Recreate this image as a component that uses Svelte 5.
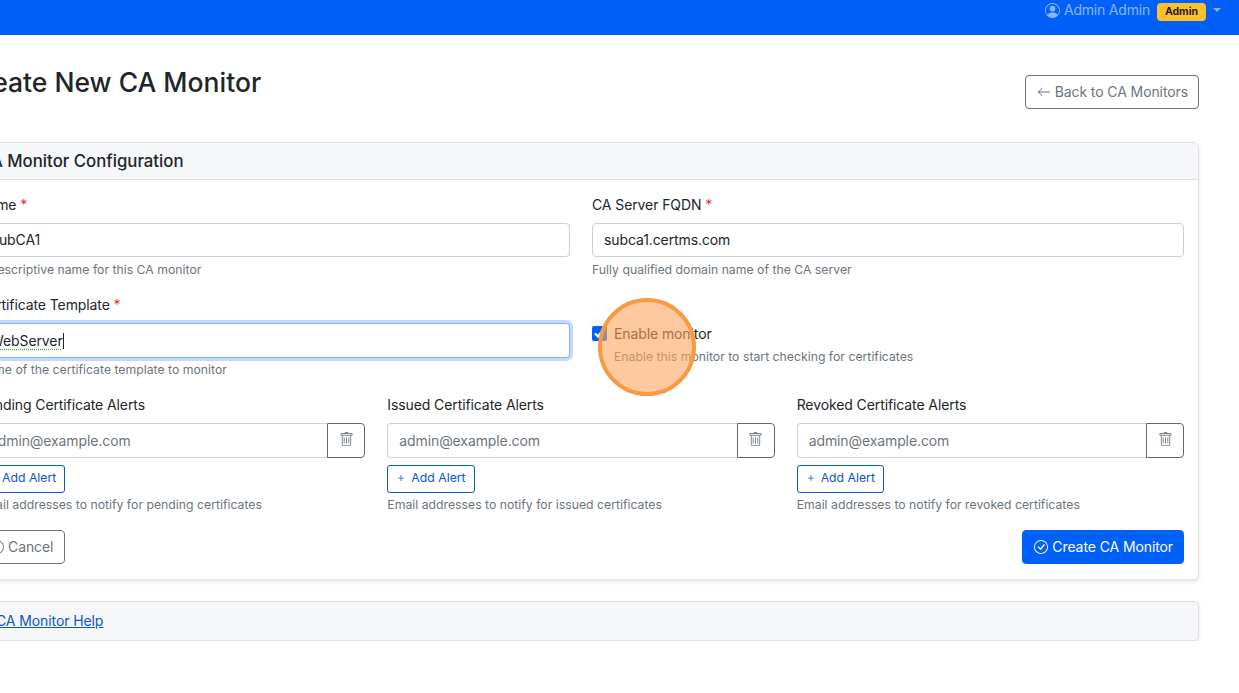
<script>
  const alerts = [
    { label: 'Pending Certificate Alerts', help: 'Email addresses to notify for pending certificates' },
    { label: 'Issued Certificate Alerts', help: 'Email addresses to notify for issued certificates' },
    { label: 'Revoked Certificate Alerts', help: 'Email addresses to notify for revoked certificates' }
  ];
</script>

<nav class="navbar">
  <div class="user">
    <svg width="15" height="15" viewBox="0 0 16 16" fill="currentColor">
      <path d="M11 6a3 3 0 1 1-6 0 3 3 0 0 1 6 0z" />
      <path fill-rule="evenodd" d="M0 8a8 8 0 1 1 16 0A8 8 0 0 1 0 8zm8-7a7 7 0 0 0-5.468 11.37C3.242 11.226 4.805 10 8 10s4.757 1.225 5.468 2.37A7 7 0 0 0 8 1z" />
    </svg>
    <span class="user-name">Admin Admin</span>
    <span class="badge">Admin</span>
    <span class="caret"></span>
  </div>
</nav>

<main class="page">
  <div class="title-row">
    <h1>Create New CA Monitor</h1>
    <button class="btn btn-grey back">
      <svg width="14" height="14" viewBox="0 0 16 16" fill="currentColor"><path fill-rule="evenodd" d="M15 8a.5.5 0 0 0-.5-.5H2.707l3.147-3.146a.5.5 0 1 0-.708-.708l-4 4a.5.5 0 0 0 0 .708l4 4a.5.5 0 0 0 .708-.708L2.707 8.5H14.5A.5.5 0 0 0 15 8z" /></svg>
      Back to CA Monitors
    </button>
  </div>

  <section class="card">
    <header class="card-header"><h2>CA Monitor Configuration</h2></header>
    <div class="card-body">
      <div class="two">
        <div class="field">
          <label for="name">Name <em>*</em></label>
          <input id="name" class="input short" value="SubCA1" />
          <small>A descriptive name for this CA monitor</small>
        </div>
        <div class="field">
          <label for="fqdn">CA Server FQDN <em>*</em></label>
          <input id="fqdn" class="input short" value="subca1.certms.com" />
          <small>Fully qualified domain name of the CA server</small>
        </div>
        <div class="field">
          <label for="tpl">Certificate Template <em>*</em></label>
          <div class="input focused"><span class="squiggle">WebServer</span><i class="cursor"></i></div>
          <small>Name of the certificate template to monitor</small>
        </div>
        <div class="check">
          <input id="enable" type="checkbox" checked />
          <div class="check-text">
            <label for="enable">Enable monitor</label>
            <small>Enable this monitor to start checking for certificates</small>
          </div>
        </div>
      </div>

      <div class="three">
        {#each alerts as a}
          <div class="field">
            <span class="label">{a.label}</span>
            <div class="group">
              <input class="input" placeholder="admin@example.com" />
              <button class="trash" aria-label="Remove">
                <svg width="15" height="17" viewBox="0 0 16 16" fill="currentColor">
                  <path d="M5.5 5.5A.5.5 0 0 1 6 6v6a.5.5 0 0 1-1 0V6a.5.5 0 0 1 .5-.5zm2.5 0a.5.5 0 0 1 .5.5v6a.5.5 0 0 1-1 0V6a.5.5 0 0 1 .5-.5zm3 .5a.5.5 0 0 0-1 0v6a.5.5 0 0 0 1 0V6z" />
                  <path fill-rule="evenodd" d="M14.5 3a1 1 0 0 1-1 1H13v9a2 2 0 0 1-2 2H5a2 2 0 0 1-2-2V4h-.5a1 1 0 0 1-1-1V2a1 1 0 0 1 1-1H6a1 1 0 0 1 1-1h2a1 1 0 0 1 1 1h3.5a1 1 0 0 1 1 1v1zM4.118 4 4 4.059V13a1 1 0 0 0 1 1h6a1 1 0 0 0 1-1V4.059L11.882 4H4.118zM2.5 3V2h11v1h-11z" />
                </svg>
              </button>
            </div>
            <button class="add">
              <svg width="12" height="12" viewBox="0 0 16 16" fill="currentColor"><path d="M8 4a.5.5 0 0 1 .5.5v3h3a.5.5 0 0 1 0 1h-3v3a.5.5 0 0 1-1 0v-3h-3a.5.5 0 0 1 0-1h3v-3A.5.5 0 0 1 8 4z" /></svg>
              Add Alert
            </button>
            <small class="alert-help">{a.help}</small>
          </div>
        {/each}
      </div>

      <div class="actions">
        <button class="btn btn-grey cancel">
          <svg width="14" height="14" viewBox="0 0 16 16" fill="currentColor"><path d="M8 15A7 7 0 1 1 8 1a7 7 0 0 1 0 14zm0 1A8 8 0 1 0 8 0a8 8 0 0 0 0 16z" /><path d="M4.646 4.646a.5.5 0 0 1 .708 0L8 7.293l2.646-2.647a.5.5 0 0 1 .708.708L8.707 8l2.647 2.646a.5.5 0 0 1-.708.708L8 8.707l-2.646 2.647a.5.5 0 0 1-.708-.708L7.293 8 4.646 5.354a.5.5 0 0 1 0-.708z" /></svg>
          Cancel
        </button>
        <button class="btn btn-primary">
          <svg width="14" height="14" viewBox="0 0 16 16" fill="currentColor"><path d="M8 15A7 7 0 1 1 8 1a7 7 0 0 1 0 14zm0 1A8 8 0 1 0 8 0a8 8 0 0 0 0 16z" /><path d="M10.97 4.97a.235.235 0 0 0-.02.022L7.477 9.417 5.384 7.323a.75.75 0 0 0-1.06 1.06L6.97 11.03a.75.75 0 0 0 1.079-.02l3.992-4.99a.75.75 0 0 0-1.071-1.05z" /></svg>
          Create CA Monitor
        </button>
      </div>
    </div>
  </section>

  <section class="card help-card">
    <a href="#help">CA Monitor Help</a>
  </section>

  <div class="click-ring"></div>
</main>

<style>
  :global(body) {
    overflow: hidden;
    background: #fff;
  }

  :global(*) {
    box-sizing: border-box;
  }

  .navbar {
    height: 35px;
    background: #0160f7;
    display: flex;
    justify-content: flex-end;
    padding-right: 18px;
    font: 14px/20px Inter, "Liberation Sans", sans-serif;
  }

  .user {
    display: flex;
    align-items: center;
    height: 20px;
    color: rgba(255, 255, 255, 0.55);
  }

  .user-name {
    margin-left: 4px;
    letter-spacing: -0.2px;
  }

  .badge {
    margin-left: 7px;
    margin-top: 4px;
    width: 49px;
    height: 18px;
    text-align: center;
    background: #ffc02e;
    color: #1d1d1f;
    font-size: 10.5px;
    font-weight: 700;
    line-height: 18px;
    border-radius: 4px;
  }

  .caret {
    margin-left: 7px;
    border-top: 4px solid rgba(255, 255, 255, 0.55);
    border-left: 4px solid transparent;
    border-right: 4px solid transparent;
  }

  .page {
    position: relative;
    width: 1236px;
    margin-left: -37px;
    font: 14px/20px Inter, "Liberation Sans", sans-serif;
    letter-spacing: -0.1px;
    color: #212529;
  }

  .title-row {
    display: flex;
    justify-content: space-between;
    padding-top: 30px;
    height: 107px;
  }

  h1 {
    margin: 0;
    font-size: 26.5px;
    line-height: 34px;
    font-weight: 500;
    letter-spacing: 0;
  }

  .btn {
    height: 34px;
    display: inline-flex;
    align-items: center;
    gap: 4px;
    padding: 0 10px 0 11px;
    border-radius: 4px;
    font: inherit;
    letter-spacing: inherit;
    background: #fff;
  }

  .btn-grey {
    border: 1px solid #6c757d;
    color: #6c757d;
  }

  .back {
    margin-top: 10px;
  }

  .cancel {
    padding-right: 11px;
  }

  .btn-primary {
    background: #0160f7;
    border: 1px solid #0160f7;
    color: #fff;
  }

  .card {
    border: 1px solid #dfe1e4;
    border-radius: 5px;
    box-shadow: 0 2px 4px rgba(0, 0, 0, 0.1);
    background: #fff;
  }

  .card-header {
    height: 37px;
    background: #f6f7f9;
    border-bottom: 1px solid #dfe1e4;
    padding: 8px 15px;
    border-radius: 5px 5px 0 0;
  }

  h2 {
    margin: 0;
    font-size: 16.8px;
    line-height: 20px;
    font-weight: 500;
    letter-spacing: 0;
  }

  .card-body {
    padding: 15px 14px 15px 14px;
  }

  .two {
    display: grid;
    grid-template-columns: 1fr 1fr;
    column-gap: 22px;
    row-gap: 16px;
  }

  .three {
    display: grid;
    grid-template-columns: repeat(3, 1fr);
    column-gap: 22px;
    margin-top: 16px;
  }

  .field {
    display: flex;
    flex-direction: column;
    align-items: flex-start;
  }

  label,
  .label {
    line-height: 20px;
  }

  .field > label,
  .field > .label {
    margin-bottom: 8px;
  }

  em {
    color: #dc3545;
    font-style: normal;
  }

  .input {
    width: 100%;
    height: 35px;
    border: 1px solid #ced1d4;
    border-radius: 4px;
    padding: 0 11px 1px;
    font: inherit;
    letter-spacing: inherit;
    color: #212529;
    background: #fff;
    outline: none;
  }

  .short {
    height: 34px;
    margin-bottom: 1px;
  }

  .input::placeholder {
    color: #6c757d;
    opacity: 1;
  }

  .focused {
    display: flex;
    align-items: center;
    padding: 0 11px;
    border-color: #86aef0;
    box-shadow: 0 0 0 3px rgba(13, 98, 245, 0.25);
  }

  .squiggle {
    text-decoration: underline dotted #5da05d;
    text-underline-offset: 3px;
  }

  .cursor {
    width: 1px;
    height: 16px;
    background: #212529;
  }

  small {
    font-size: 12.25px;
    line-height: 18px;
    color: #6c757d;
    letter-spacing: 0;
    margin-top: 3px;
  }

  .check {
    display: flex;
    gap: 7px;
    align-self: start;
    margin-top: 29px;
  }

  .check input {
    width: 15px;
    height: 15px;
    margin: 2px 0 0;
    accent-color: #0160f7;
  }

  .check-text {
    display: flex;
    flex-direction: column;
  }

  .check-text small {
    margin-top: 4px;
  }

  .group {
    display: flex;
    width: 100%;
  }

  .group .input {
    flex: 1;
    min-width: 0;
    border-radius: 4px 0 0 4px;
    border-right: 0;
  }

  .trash {
    width: 38px;
    height: 35px;
    border: 1px solid #5f666d;
    border-radius: 0 4px 4px 0;
    background: #fff;
    color: #7c848c;
    padding: 0 0 2px;
    display: flex;
    align-items: center;
    justify-content: center;
  }

  .add {
    margin-top: 7px;
    height: 28px;
    display: inline-flex;
    align-items: center;
    gap: 4px;
    padding: 0 8px 2px 7px;
    border: 1px solid #0b56c9;
    border-radius: 3px;
    background: #fff;
    color: #0b56c9;
    font: inherit;
    font-size: 12.25px;
    letter-spacing: 0;
  }

  .alert-help {
    margin-top: 3px;
  }

  .actions {
    display: flex;
    justify-content: space-between;
    margin-top: 16px;
  }

  .help-card {
    margin-top: 21px;
    height: 40px;
    background: #f6f7f9;
    padding: 9px 32px;
  }

  .help-card a {
    color: #0b56c9;
  }

  .click-ring {
    position: absolute;
    left: 635px;
    top: 263px;
    width: 98px;
    height: 98px;
    border-radius: 50%;
    border: 4px solid #f79a42;
    background: rgba(253, 165, 95, 0.6);
  }
</style>
